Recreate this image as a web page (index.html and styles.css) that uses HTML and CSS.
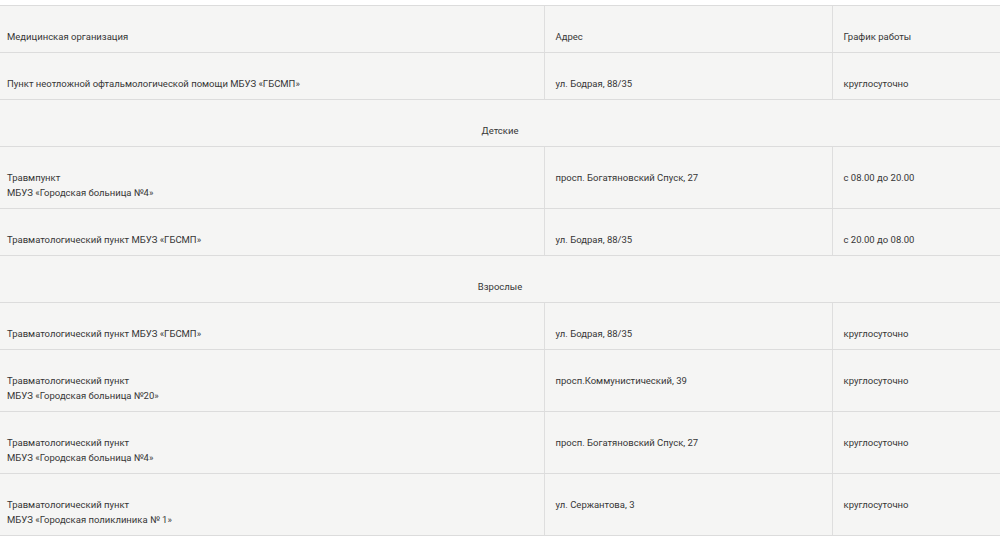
FILE: index.html
```html
<!DOCTYPE html>
<html lang="ru">
<head>
<meta charset="utf-8">
<link rel="stylesheet" href="styles.css">
</head>
<body>
<div class="wrap">
<table class="tbl">
  <colgroup><col class="c1"><col class="c2"><col class="c3"></colgroup>
  <tr><td>Медицинская организация</td><td>Адрес</td><td>График работы</td></tr>
  <tr><td>Пункт неотложной офтальмологической помощи МБУЗ «ГБСМП»</td><td>ул. Бодрая, 88/35</td><td>круглосуточно</td></tr>
  <tr class="sec"><td colspan="3">Детские</td></tr>
  <tr><td>Травмпункт<br>МБУЗ «Городская больница №4»</td><td>просп. Богатяновский Спуск, 27</td><td>с 08.00 до 20.00</td></tr>
  <tr><td>Травматологический пункт МБУЗ «ГБСМП»</td><td>ул. Бодрая, 88/35</td><td>с 20.00 до 08.00</td></tr>
  <tr class="sec"><td colspan="3">Взрослые</td></tr>
  <tr><td>Травматологический пункт МБУЗ «ГБСМП»</td><td>ул. Бодрая, 88/35</td><td>круглосуточно</td></tr>
  <tr><td>Травматологический пункт<br>МБУЗ «Городская больница №20»</td><td>просп.Коммунистический, 39</td><td>круглосуточно</td></tr>
  <tr><td>Травматологический пункт<br>МБУЗ «Городская больница №4»</td><td>просп. Богатяновский Спуск, 27</td><td>круглосуточно</td></tr>
  <tr><td>Травматологический пункт<br>МБУЗ «Городская поликлиника № 1»</td><td>ул. Сержантова, 3</td><td>круглосуточно</td></tr>
</table>
</div>
</body>
</html>
```
FILE: styles.css
```css
html, body {
  margin: 0;
  padding: 0;
  background: #ffffff;
}
.wrap {
  padding-top: 5px;
}
.tbl {
  width: 1000px;
  border-collapse: collapse;
  table-layout: fixed;
  background: #f5f5f4;
  font-family: Roboto, "Noto Sans", sans-serif;
  font-size: 9.5px;
  line-height: 15px;
  color: #363636;
}
.c1 { width: 544px; }
.c2 { width: 288px; }
.c3 { width: 168px; }
.tbl td {
  border-top: 1px solid #dcdcdc;
  border-bottom: 1px solid #dcdcdc;
  padding: 23px 7px 8px 7px;
  vertical-align: top;
  text-align: left;
}
.tbl td + td {
  border-left: 1px solid #dedede;
  padding-left: 11px;
}
.tbl tr.sec td {
  text-align: center;
}
```
